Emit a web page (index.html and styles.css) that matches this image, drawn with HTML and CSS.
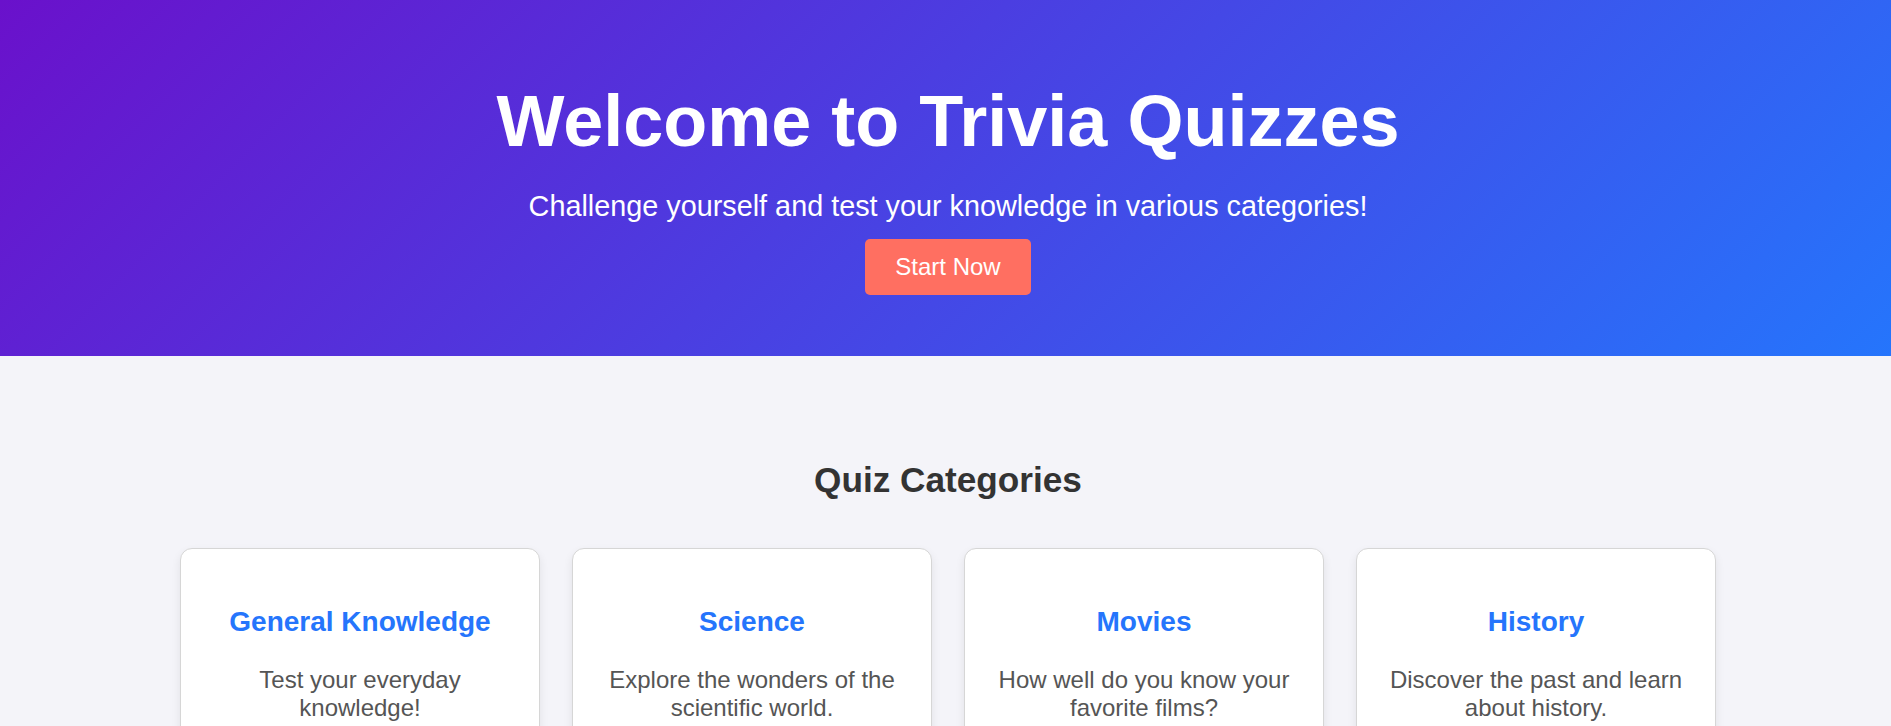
FILE: index.html
```html
<!DOCTYPE html>
<html lang="en">
<head>
<meta charset="UTF-8">
<title>Trivia Quizzes</title>
<link rel="stylesheet" href="styles.css">
</head>
<body>
  <header class="hero">
    <h1 class="hero-title">Welcome to Trivia Quizzes</h1>
    <p class="hero-subtitle">Challenge yourself and test your knowledge in various categories!</p>
    <a class="hero-btn" href="#categories">Start Now</a>
  </header>
  <section class="categories" id="categories">
    <h2 class="section-title">Quiz Categories</h2>
    <div class="card-grid">
      <div class="card">
        <h3 class="card-title">General Knowledge</h3>
        <p class="card-text">Test your everyday knowledge!</p>
      </div>
      <div class="card">
        <h3 class="card-title">Science</h3>
        <p class="card-text">Explore the wonders of the scientific world.</p>
      </div>
      <div class="card">
        <h3 class="card-title">Movies</h3>
        <p class="card-text">How well do you know your favorite films?</p>
      </div>
      <div class="card">
        <h3 class="card-title">History</h3>
        <p class="card-text">Discover the past and learn about history.</p>
      </div>
    </div>
  </section>
</body>
</html>
```
FILE: styles.css
```css
* {
  box-sizing: border-box;
}

body {
  margin: 0;
  font-family: "Liberation Sans", Arial, sans-serif;
  background: #f4f4f9;
  color: #333;
}

.hero {
  display: flex;
  flex-direction: column;
  align-items: center;
  padding: 80px 20px 61px 25px;
  background: linear-gradient(135deg, #6a11cb 0%, #2575fc 100%);
  color: #fff;
  text-align: center;
}

.hero-title {
  margin: 0;
  font-size: 72px;
  font-weight: 700;
  line-height: normal;
}

.hero-subtitle {
  margin: 28px 0 16px;
  font-size: 28.8px;
  line-height: normal;
}

.hero-btn {
  display: inline-block;
  padding: 14px 30px;
  font-size: 24px;
  line-height: 28px;
  color: #fff;
  background: #ff6f61;
  border-radius: 5px;
  text-decoration: none;
}

.categories {
  padding: 104px 20px 40px 25px;
  text-align: center;
}

.section-title {
  margin: 0 0 48px;
  font-size: 35.2px;
  font-weight: 700;
  line-height: normal;
  color: #333;
}

.card-grid {
  display: grid;
  grid-template-columns: repeat(4, 360px);
  gap: 32px;
  justify-content: center;
}

.card {
  background: #fff;
  border: 1px solid #d6d6d6;
  border-radius: 12px;
  box-shadow: 0 4px 10px rgba(0, 0, 0, 0.08);
  padding: 57px 30px 40px;
}

.card-title {
  margin: 0 0 28px;
  font-size: 28px;
  font-weight: 700;
  line-height: normal;
  color: #2575fc;
}

.card-text {
  margin: 0;
  font-size: 24px;
  line-height: normal;
  color: #555;
}
```
